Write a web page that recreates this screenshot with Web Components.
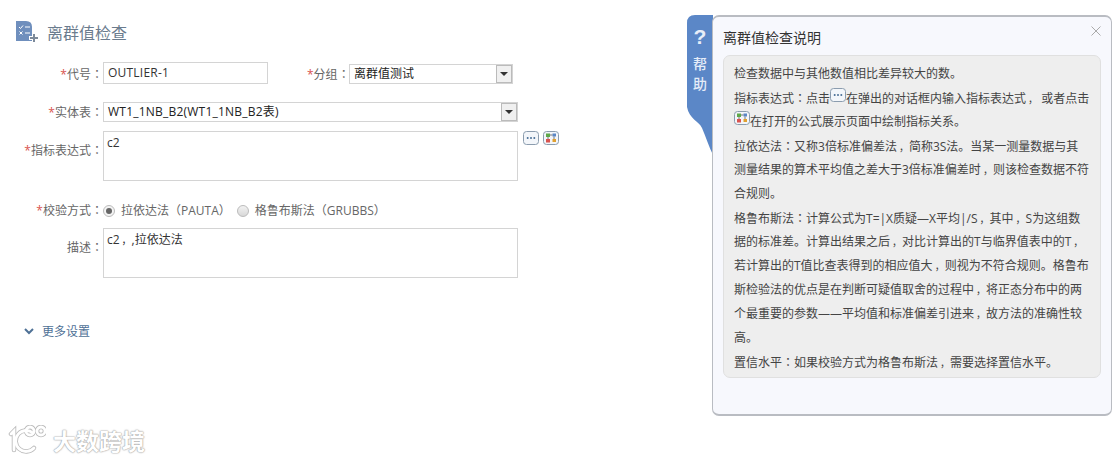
<!DOCTYPE html>
<html lang="zh-CN">
<head>
<meta charset="utf-8">
<title>离群值检查</title>
<style>
  html, body { margin: 0; height: 100%; background: #fff; overflow: hidden; }
  body { font: 12px "Open Sans", "Noto Sans CJK SC", sans-serif; color: #333; }
</style>
</head>
<body>
<outlier-page></outlier-page>

<script>
// centered punctuation comes from the TC face, lang keeps locl from swapping it back
const TC = `lang="zh-TW" style="font-family:'Noto Sans CJK TC',sans-serif"`;
const COLON = `<span ${TC}>：</span>`;
const COMMA = '<span style="font-size:10px;padding-left:2px">，</span>';
const zh = s => s.replace(/：/g, COLON).replace(/，/g, COMMA);
const paren = s => `<span ${TC}>（</span>${s}<span ${TC}>）</span>`;

class FormRow extends HTMLElement {
  constructor() {
    super();
    const req = this.hasAttribute("required") ? "<b>*</b>" : "";
    const w = this.getAttribute("label-width") || "103";
    this.attachShadow({ mode: "open" }).innerHTML = `
      <style>
        :host { display: flex; align-items: flex-start; }
        .label { width: ${w}px; height: 20px; flex: none; text-align: right; color: #666; line-height: 20px; margin-top: var(--label-top, 1px); white-space: nowrap; }
        b { color: #d9534f; font-weight: normal; }
      </style>
      <div class="label">${req}${this.getAttribute("label")}${COLON}</div>
      <slot></slot>`;
  }
}
customElements.define("form-row", FormRow);

class TextBox extends HTMLElement {
  constructor() {
    super();
    this.attachShadow({ mode: "open" }).innerHTML = `
      <style>
        :host { display: block; box-sizing: border-box; border: 1px solid #d4d4d4; background: #fff; padding: 0 4px; line-height: 20px; color: #333; flex: none; white-space: nowrap; }
        :host([multi]) { padding: 1px 3px 0; }
      </style><slot></slot>`;
  }
}
customElements.define("text-box", TextBox);

class DropBox extends HTMLElement {
  constructor() {
    super();
    this.attachShadow({ mode: "open" }).innerHTML = `
      <style>
        :host { display: flex; box-sizing: border-box; height: 20px; border: 1px solid #d4d4d4; background: #fff; flex: none; }
        .val { flex: 1; padding-left: 4px; line-height: 18px; color: #222; white-space: nowrap; }
        .btn { width: 16px; margin: 0; box-sizing: border-box; border: 1px solid #bbb; background: #f0f0f0; display: flex; align-items: center; justify-content: center; }
        .btn i { border: 4px solid transparent; border-top: 4px solid #333; border-bottom: 0; }
      </style>
      <div class="val"><slot></slot></div>
      <div class="btn"><i></i></div>`;
  }
}
customElements.define("drop-box", DropBox);

class RadioItem extends HTMLElement {
  constructor() {
    super();
    this.attachShadow({ mode: "open" }).innerHTML = `
      <style>
        :host { display: inline-flex; align-items: center; color: #666; white-space: nowrap; line-height: 20px; }
        .dot { width: 12px; height: 12px; box-sizing: border-box; border-radius: 50%; border: 1px solid #bbb; background: linear-gradient(#f2f2f2, #d8d8d8); margin-right: 6px; display: flex; align-items: center; justify-content: center; }
        :host([checked]) .dot { background: #f4f4f4; }
        :host([checked]) .dot::after { content: ""; width: 6px; height: 6px; border-radius: 50%; background: #666; }
      </style>
      <span class="dot"></span><span><slot></slot></span>`;
  }
}
customElements.define("radio-item", RadioItem);

class IconBtn extends HTMLElement {
  constructor() {
    super();
    const inner = this.getAttribute("kind") === "flow"
      ? `<rect x="3" y="2.500" width="4" height="3.500" fill="#5fa84a"/><rect x="9.500" y="2.500" width="3.500" height="3" fill="#5b87c7"/><rect x="3" y="8" width="4" height="3.500" fill="#d9534f"/><rect x="9.500" y="8" width="3.500" height="3" fill="#e0a030"/><path d="M7 4h2.500M11 5.500v2.500M5 6v2" stroke="#777" fill="none"/>`
      : `<circle cx="4.700" cy="7" r="1" fill="#4a6f96"/><circle cx="8" cy="7" r="1" fill="#4a6f96"/><circle cx="11.300" cy="7" r="1" fill="#4a6f96"/>`;
    this.attachShadow({ mode: "open" }).innerHTML = `
      <style>:host { display: inline-block; width: 16px; height: 14px; line-height: 0; flex: none; } svg { display: block; }</style>
      <svg width="16" height="14" viewBox="0 0 16 14"><rect x=".5" y=".5" width="15" height="13" rx="3" fill="#f3f6fa" stroke="#8b9cae"/>${inner}</svg>`;
  }
}
customElements.define("icon-btn", IconBtn);

class HelpPanel extends HTMLElement {
  constructor() {
    super();
    this.attachShadow({ mode: "open" }).innerHTML = `
      <style>
        :host { display: flex; width: 425px; height: 401px; flex: none; margin-top: 15px; }
        .tab { width: 26px; height: 140px; flex: none; margin-right: -1px; display: flex; flex-direction: column; align-items: center; color: #e4ecf8; position: relative; z-index: 0; }
        .tab svg { position: absolute; left: 0; top: 0; z-index: -1; }
        .q { font: bold 21px/24px "Liberation Sans", sans-serif; color: #e8eef8; margin-top: 10px; }
        .tab span { font-size: 14px; line-height: 20px; font-weight: 500; }
        .q + span { margin-top: 5px; }
        .box { flex: 1; position: relative; box-sizing: border-box; padding: 11px 10px 0 10px; background: #f7f8fd; border: 1px solid #b9bcc2; border-top-width: 2px; border-bottom-width: 2px; border-radius: 7px; }
        h2 { margin: 0 0 7px 0; font-size: 14px; font-weight: normal; line-height: 20px; color: #333; }
        .x { position: absolute; right: 10px; top: 9px; }
        .body { background: #eeeeee; border: 1px solid #e0e0e0; border-radius: 7px; padding: 6px 10px 0; line-height: 24px; color: #444; white-space: nowrap; height: 323px; box-sizing: border-box; }
      </style>
      <div class="tab">
        <svg width="26" height="140" viewBox="0 0 26 140"><path d="M26 0H8Q0 0 0 8V92C2 104 12 106 15 113C19 122 22 132 26 140Z" fill="#5b87c7"/></svg>
        <div class="q">?</div><span>帮</span><span>助</span>
      </div>
      <div class="box">
        <h2><slot name="title"></slot></h2>
        <svg class="x" width="10" height="10" viewBox="0 0 10 10"><path d="M.5.5l9 9M9.5.5l-9 9" stroke="#aaa"/></svg>
        <div class="body"><slot></slot></div>
      </div>`;
  }
}
customElements.define("help-panel", HelpPanel);

class WaterMark extends HTMLElement {
  constructor() {
    super();
    const logo = `<path d="M3 9l3-3v19"/><path d="M25 8a10.500 10.500 0 1 0 1 15"/><circle cx="22" cy="6" r="4"/><circle cx="33" cy="6" r="4"/>`;
    this.attachShadow({ mode: "open" }).innerHTML = `
      <style>
        :host { position: absolute; left: 8px; top: 424px; display: flex; align-items: center; height: 32px; }
        svg { display: block; margin-right: 7px; }
        span { font: bold 23px/30px "Noto Sans CJK SC", sans-serif; color: #fff; text-shadow: 0 0 1px #aaa, 0 0 1px #aaa, 0 0 2px #aaa; }
      </style>
      <svg width="38" height="30" viewBox="0 0 38 30" fill="none" stroke-linecap="round">
        <g stroke="#bbb" stroke-width="4.500">${logo}</g>
        <g stroke="#fff" stroke-width="2.800">${logo}</g>
      </svg>
      <span>大数跨境</span>`;
  }
}
customElements.define("water-mark", WaterMark);

const HELP_LINES = [
  "检查数据中与其他数值相比差异较大的数。",
  '指标表达式：点击<icon-btn class="ib"></icon-btn>在弹出的对话框内输入指标表达式， 或者点击',
  '<icon-btn class="ib" kind="flow"></icon-btn>在打开的公式展示页面中绘制指标关系。',
  "拉依达法：又称3倍标准偏差法，简称3S法。当某一测量数据与其",
  "测量结果的算术平均值之差大于3倍标准偏差时，则该检查数据不符",
  "合规则。",
  "格鲁布斯法：计算公式为T=|X质疑—X平均|/S，其中，S为这组数",
  "据的标准差。计算出结果之后，对比计算出的T与临界值表中的T，",
  "若计算出的T值比查表得到的相应值大，则视为不符合规则。格鲁布",
  "斯检验法的优点是在判断可疑值取舍的过程中，将正态分布中的两",
  "个最重要的参数——平均值和标准偏差引进来，故方法的准确性较",
  "高。",
  "置信水平：如果校验方式为格鲁布斯法，需要选择置信水平。"
];

class OutlierPage extends HTMLElement {
  constructor() {
    super();
    this.attachShadow({ mode: "open" }).innerHTML = `
      <style>
        :host { display: flex; width: 1112px; height: 460px; position: relative; overflow: hidden; }
        .form { flex: 1; min-width: 0; padding-top: 21px; }
        .title { display: flex; align-items: center; height: 22px; padding-left: 16px; font-size: 16px; color: #6b7c8e; }
        .title svg { margin-right: 7px; }
        .r1 { margin-top: 19px; height: 22px; --label-top: 2px; }
        .r2 { margin-top: 18px; height: 20px; --label-top: 0; }
        .r3 { margin-top: 9px; height: 50px; --label-top: 9px; }
        .r4 { margin-top: 19px; height: 20px; --label-top: 0; }
        .r5 { margin-top: 8px; height: 50px; --label-top: 9px; }
        .tools { display: flex; gap: 4px; margin-left: 5px; }
        .more { display: flex; align-items: center; height: 20px; margin-top: 43px; padding-left: 24px; color: #4f7196; }
        .more svg { margin-right: 8px; }
        .radios { display: flex; gap: 6px; }
        .pad { margin-left: 39px; }
        .wide { letter-spacing: .22px; }
        p { margin: 0; height: 24px; }
        .ib { vertical-align: 1px; }
      </style>
      <div class="form">
        <div class="title">
          <svg width="24" height="22" viewBox="0 0 24 22">
            <path d="M0 0H10Q16 0 16 6V20H0Z" fill="#6f8fbd"/>
            <path d="M3 6l1.500 1.500L7 4.500M9 6h5M3.500 10.500l3 3M6.500 10.500l-3 3M9 12h5" stroke="#fff" fill="none"/>
            <path d="M18 12v10M13 17h10" stroke="#fff" stroke-width="4"/>
            <path d="M18 13v8M14 17h8" stroke="#7d8a99" stroke-width="2"/>
          </svg>离群值检查
        </div>
        <form-row class="r1" label="代号" required>
          <text-box class="wide" style="width:165px;height:22px">OUTLIER-1</text-box>
          <div class="pad"><form-row label="分组" required label-width="42"><drop-box style="width:164px;margin-top:2px">离群值测试</drop-box></form-row></div>
        </form-row>
        <form-row class="r2" label="实体表" required><drop-box class="wide" style="width:415px">WT1_1NB_B2(WT1_1NB_B2表)</drop-box></form-row>
        <form-row class="r3" label="指标表达式" required>
          <text-box multi style="width:415px;height:50px">c2</text-box>
          <div class="tools"><icon-btn></icon-btn><icon-btn kind="flow"></icon-btn></div>
        </form-row>
        <form-row class="r4" label="校验方式" required>
          <div class="radios"><radio-item checked>拉依达法${paren("PAUTA")}</radio-item><radio-item>格鲁布斯法${paren("GRUBBS")}</radio-item></div>
        </form-row>
        <form-row class="r5" label="描述"><text-box multi style="width:415px;height:50px">c2${COMMA},拉依达法</text-box></form-row>
        <div class="more"><svg width="10" height="7" viewBox="0 0 10 7"><path d="M1 1l4 4 4-4" stroke="#4f7196" stroke-width="2" fill="none"/></svg>更多设置</div>
      </div>
      <help-panel>
        <span slot="title">离群值检查说明</span>
        ${HELP_LINES.map(l => `<p>${zh(l)}</p>`).join("")}
      </help-panel>
      <water-mark></water-mark>`;
  }
}
customElements.define("outlier-page", OutlierPage);
</script>
</body>
</html>
